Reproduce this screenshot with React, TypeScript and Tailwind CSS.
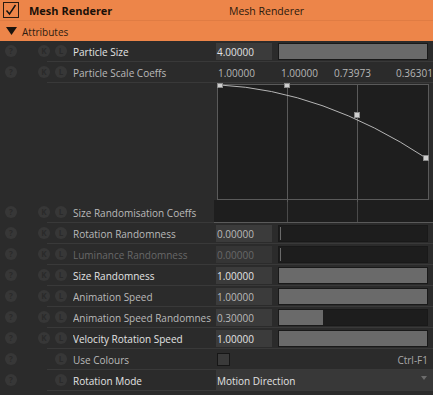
import React from "react";

type Tone = "bright" | "normal" | "dim";

const labelColor: Record<Tone, string> = {
  bright: "text-[#e3e3e3]",
  normal: "text-[#bababa]",
  dim: "text-[#686868]",
};

const fieldBg: Record<Tone, string> = {
  bright: "bg-[#3b3b3b]",
  normal: "bg-[#3b3b3b]",
  dim: "bg-[#353535]",
};

function Circ({ ch, className }: { ch: string; className?: string }) {
  return (
    <div
      className={
        "flex h-[12px] w-[12px] shrink-0 items-center justify-center rounded-full bg-[#373737] text-[8px] font-bold leading-none text-[#2a2a2a] " +
        (className ?? "")
      }
    >
      {ch}
    </div>
  );
}

function Row({
  label,
  tone = "normal",
  k = true,
  children,
  sep,
}: {
  label: string;
  tone?: Tone;
  k?: boolean;
  children?: React.ReactNode;
  sep?: React.ReactNode;
}) {
  return (
    <div className="flex flex-col">
      <div className="flex h-[20px] items-center">
        <Circ ch="?" className="ml-[5px]" />
        {k ? <Circ ch="K" className="ml-[21px]" /> : <div className="ml-[21px] w-[12px] shrink-0" />}
        <Circ ch="L" className="ml-[5px]" />
        <div className={"ml-[6px] mt-[2px] w-[143px] shrink-0 overflow-hidden whitespace-nowrap " + labelColor[tone]}>
          {label}
        </div>
        <div className="flex h-full flex-1 items-center">{children}</div>
      </div>
      {sep ?? <div className="ml-[47px] h-px bg-[#393939]" />}
    </div>
  );
}

function Field({ v, tone = "normal" }: { v: string; tone?: Tone }) {
  return (
    <div className={"flex h-[17px] w-[56px] shrink-0 items-center pl-[1px] pt-[2px] " + fieldBg[tone] + " " + labelColor[tone]}>
      {v}
    </div>
  );
}

function Slider({ pct }: { pct: number }) {
  return (
    <div className="ml-[6px] flex h-[17px] w-[150px] shrink-0 border border-[#191919] bg-[#1d1d1d]">
      {pct > 0 ? (
        <div className="h-full bg-[#6a6a6a]" style={{ width: pct + "%" }} />
      ) : (
        <div className="my-[1px] ml-px w-px bg-[#6a6a6a]" />
      )}
    </div>
  );
}

export default function App() {
  return (
    <div className="h-[395px] w-[433px] overflow-hidden bg-[#2b2b2b] text-[10px] leading-[14px] [font-family:'Open_Sans','Noto_Sans',sans-serif]">
      {/* header row 1 */}
      <div className="flex h-[21px] items-center border-b border-[#e07c43] bg-[#ed8549]">
        <div className="ml-[3px] flex h-[16px] w-[16px] shrink-0 items-center justify-center border border-[#2a1a10]">
          <svg width="14" height="14" viewBox="0 0 14 14">
            <path d="M2.5 7.5 L5.5 11 L11.5 2" fill="none" stroke="#111" strokeWidth="1.4" />
          </svg>
        </div>
        <div className="ml-[10px] mt-[1px] w-[200px] shrink-0 text-[11px] font-bold text-[#1a1008]">Mesh Renderer</div>
        <div className="mt-[1px] text-[10.5px] text-[#2a190d]">Mesh Renderer</div>
      </div>
      {/* header row 2 */}
      <div className="flex h-[20px] items-center bg-[#ed8549]">
        <svg width="11" height="9" viewBox="0 0 11 9" className="ml-[6px]">
          <path d="M0 0 H11 L5.5 8 Z" fill="#1c140e" />
        </svg>
        <div className="ml-[5px] mt-[1px] text-[#2e1c10]">Attributes</div>
      </div>

      <Row label="Particle Size" tone="bright">
        <Field v="4.00000" tone="bright" />
        <Slider pct={100} />
      </Row>

      <Row label="Particle Scale Coeffs">
        <div className="ml-[2px] mt-[2px] flex text-[#b6b6b6]">
          <div className="w-[63px]">1.00000</div>
          <div className="w-[53px]">1.00000</div>
          <div className="w-[62px]">0.73973</div>
          <div>0.36301</div>
        </div>
      </Row>

      {/* graph */}
      <div className="flex h-[119px]">
        <svg width="220" height="119" viewBox="0 0 220 119" className="ml-[213px]">
          <rect x="1" y="117" width="219" height="2" fill="#1e1e1e" />
          <rect x="4.5" y="1.5" width="211" height="115" fill="#1e1e1e" stroke="#5a5a5a" strokeWidth="1" />
          <line x1="74.5" y1="1.5" x2="74.5" y2="119" stroke="#5a5a5a" strokeWidth="1" />
          <line x1="144.5" y1="1.5" x2="144.5" y2="119" stroke="#5a5a5a" strokeWidth="1" />
          <path d="M7 2 Q110 7.3 213 75" fill="none" stroke="#b5b5b5" strokeWidth="1" />
          <rect x="4.5" y="0.5" width="5" height="4" fill="#cfcfcf" stroke="#8a8a8a" strokeWidth="1" />
          <rect x="71.5" y="0.5" width="5" height="4" fill="#cfcfcf" stroke="#8a8a8a" strokeWidth="1" />
          <rect x="141.5" y="29.5" width="5" height="5" fill="#cfcfcf" stroke="#8a8a8a" strokeWidth="1" />
          <rect x="210.5" y="72.5" width="5" height="5" fill="#cfcfcf" stroke="#8a8a8a" strokeWidth="1" />
        </svg>
      </div>

      <Row
        label="Size Randomisation Coeffs"
        sep={
          <div className="flex h-px">
            <div className="ml-[47px] w-[167px] bg-[#393939]" />
            <div className="flex-1 bg-[#5a5a5a]" />
          </div>
        }
      >
        <svg width="219" height="20" viewBox="0 0 219 20" className="-ml-[2px]">
          <rect x="0" y="0" width="219" height="20" fill="#1e1e1e" />
          <line x1="73.5" y1="0" x2="73.5" y2="20" stroke="#4a4a4a" strokeWidth="1" />
          <line x1="143.5" y1="0" x2="143.5" y2="20" stroke="#4a4a4a" strokeWidth="1" />
        </svg>
      </Row>

      <Row label="Rotation Randomness">
        <Field v="0.00000" />
        <Slider pct={0} />
      </Row>
      <Row label="Luminance Randomness" tone="dim">
        <Field v="0.00000" tone="dim" />
        <Slider pct={0} />
      </Row>
      <Row label="Size Randomness" tone="bright">
        <Field v="1.00000" tone="bright" />
        <Slider pct={100} />
      </Row>
      <Row label="Animation Speed">
        <Field v="1.00000" />
        <Slider pct={100} />
      </Row>
      <Row label="Animation Speed Randomnes">
        <Field v="0.30000" />
        <Slider pct={30} />
      </Row>
      <Row label="Velocity Rotation Speed" tone="bright">
        <Field v="1.00000" tone="bright" />
        <Slider pct={100} />
      </Row>
      <Row label="Use Colours" k={false}>
        <div className="ml-px h-[13px] w-[13px] shrink-0 border border-[#161616] bg-[#3a3a3a]" />
        <div className="flex-1" />
        <div className="mt-[2px] pr-[5px] text-[#a8a8a8]">Ctrl-F1</div>
      </Row>
      <Row label="Rotation Mode" tone="bright" k={false}>
        <div className="flex h-full flex-1 items-center justify-between bg-[#383838] pl-px pr-[6px] text-[#e3e3e3]">
          <span className="mt-[2px]">Motion Direction</span>
          <svg width="6" height="5" viewBox="0 0 6 5" className="mb-[4px]">
            <path d="M0 0 H6 L3 4 Z" fill="#6c6c6c" />
          </svg>
        </div>
      </Row>
    </div>
  );
}
